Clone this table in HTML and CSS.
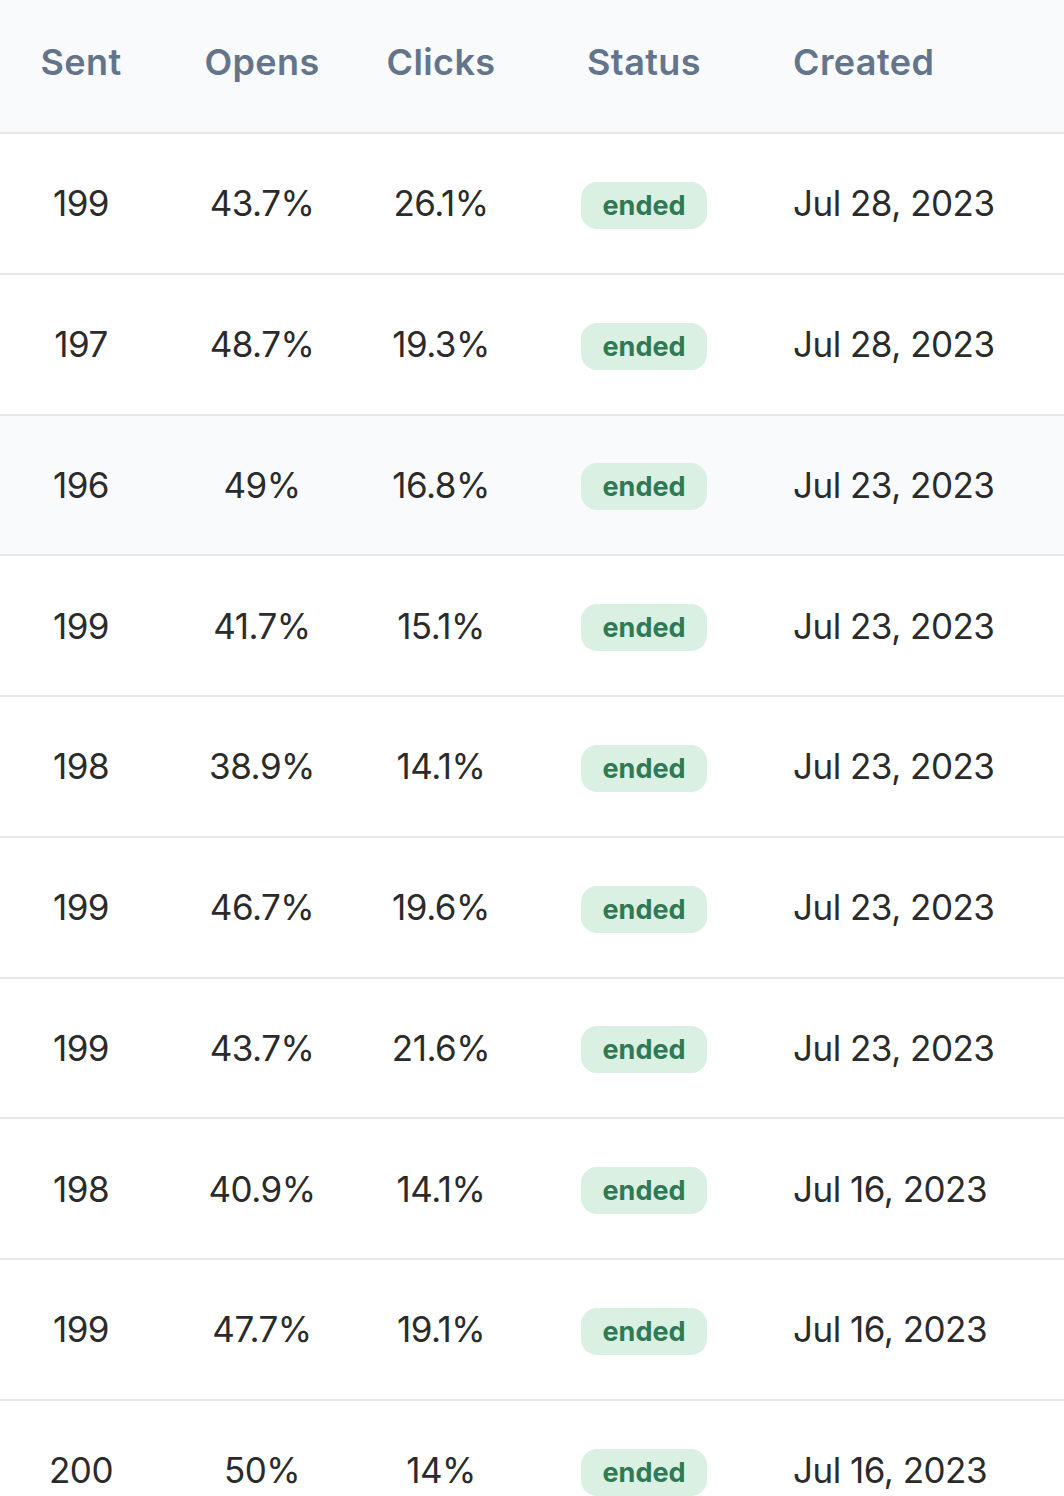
FILE: index.html
```html
<!DOCTYPE html>
<html>
<head>
<meta charset="utf-8">
<link rel="stylesheet" href="styles.css">
</head>
<body>
<div class="table">
  <div class="row head">
    <div class="cell">Sent</div>
    <div class="cell">Opens</div>
    <div class="cell">Clicks</div>
    <div class="cell">Status</div>
    <div class="cell left">Created</div>
  </div>
  <div class="row">
    <div class="cell">199</div><div class="cell">43.7%</div><div class="cell">26.1%</div>
    <div class="cell"><span class="badge">ended</span></div><div class="cell left">Jul 28, 2023</div>
  </div>
  <div class="row">
    <div class="cell">197</div><div class="cell">48.7%</div><div class="cell">19.3%</div>
    <div class="cell"><span class="badge">ended</span></div><div class="cell left">Jul 28, 2023</div>
  </div>
  <div class="row hover">
    <div class="cell">196</div><div class="cell">49%</div><div class="cell">16.8%</div>
    <div class="cell"><span class="badge">ended</span></div><div class="cell left">Jul 23, 2023</div>
  </div>
  <div class="row">
    <div class="cell">199</div><div class="cell">41.7%</div><div class="cell">15.1%</div>
    <div class="cell"><span class="badge">ended</span></div><div class="cell left">Jul 23, 2023</div>
  </div>
  <div class="row">
    <div class="cell">198</div><div class="cell">38.9%</div><div class="cell">14.1%</div>
    <div class="cell"><span class="badge">ended</span></div><div class="cell left">Jul 23, 2023</div>
  </div>
  <div class="row">
    <div class="cell">199</div><div class="cell">46.7%</div><div class="cell">19.6%</div>
    <div class="cell"><span class="badge">ended</span></div><div class="cell left">Jul 23, 2023</div>
  </div>
  <div class="row">
    <div class="cell">199</div><div class="cell">43.7%</div><div class="cell">21.6%</div>
    <div class="cell"><span class="badge">ended</span></div><div class="cell left">Jul 23, 2023</div>
  </div>
  <div class="row">
    <div class="cell">198</div><div class="cell">40.9%</div><div class="cell">14.1%</div>
    <div class="cell"><span class="badge">ended</span></div><div class="cell left">Jul 16, 2023</div>
  </div>
  <div class="row">
    <div class="cell">199</div><div class="cell">47.7%</div><div class="cell">19.1%</div>
    <div class="cell"><span class="badge">ended</span></div><div class="cell left">Jul 16, 2023</div>
  </div>
  <div class="row">
    <div class="cell">200</div><div class="cell">50%</div><div class="cell">14%</div>
    <div class="cell"><span class="badge">ended</span></div><div class="cell left">Jul 16, 2023</div>
  </div>
</div>
</body>
</html>
```
FILE: styles.css
```css
html, body {
  margin: 0;
  padding: 0;
  background: #ffffff;
}
body {
  font-family: "Inter", "Noto Sans", sans-serif;
  color: #2b2b2b;
  overflow: hidden;
}
.table {
  width: 1064px;
}
.row {
  display: grid;
  grid-template-columns: 162px 200px 158px 248px 1fr;
  align-items: center;
  box-sizing: border-box;
  height: 140.75px;
  border-bottom: 2px solid #e6e7ea;
  font-size: 35px;
  letter-spacing: -0.5px;
  font-weight: 400;
}
.row.head {
  height: 134px;
  background: #f8fafc;
  color: #64748b;
  font-size: 36px;
  font-weight: 600;
  letter-spacing: 0.4px;
  padding-bottom: 8px;
}
.row.hover {
  background: #f8fafc;
}
.cell {
  text-align: center;
  white-space: nowrap;
}
.cell.left {
  text-align: left;
  padding-left: 25px;
}
.badge {
  display: inline-block;
  height: 47px;
  line-height: 47px;
  margin-top: 4px;
  padding: 0 21px;
  border-radius: 16px;
  background: #d9f0e3;
  color: #2f7a55;
  font-size: 27px;
  font-weight: 700;
  letter-spacing: 0;
  vertical-align: middle;
}
```
